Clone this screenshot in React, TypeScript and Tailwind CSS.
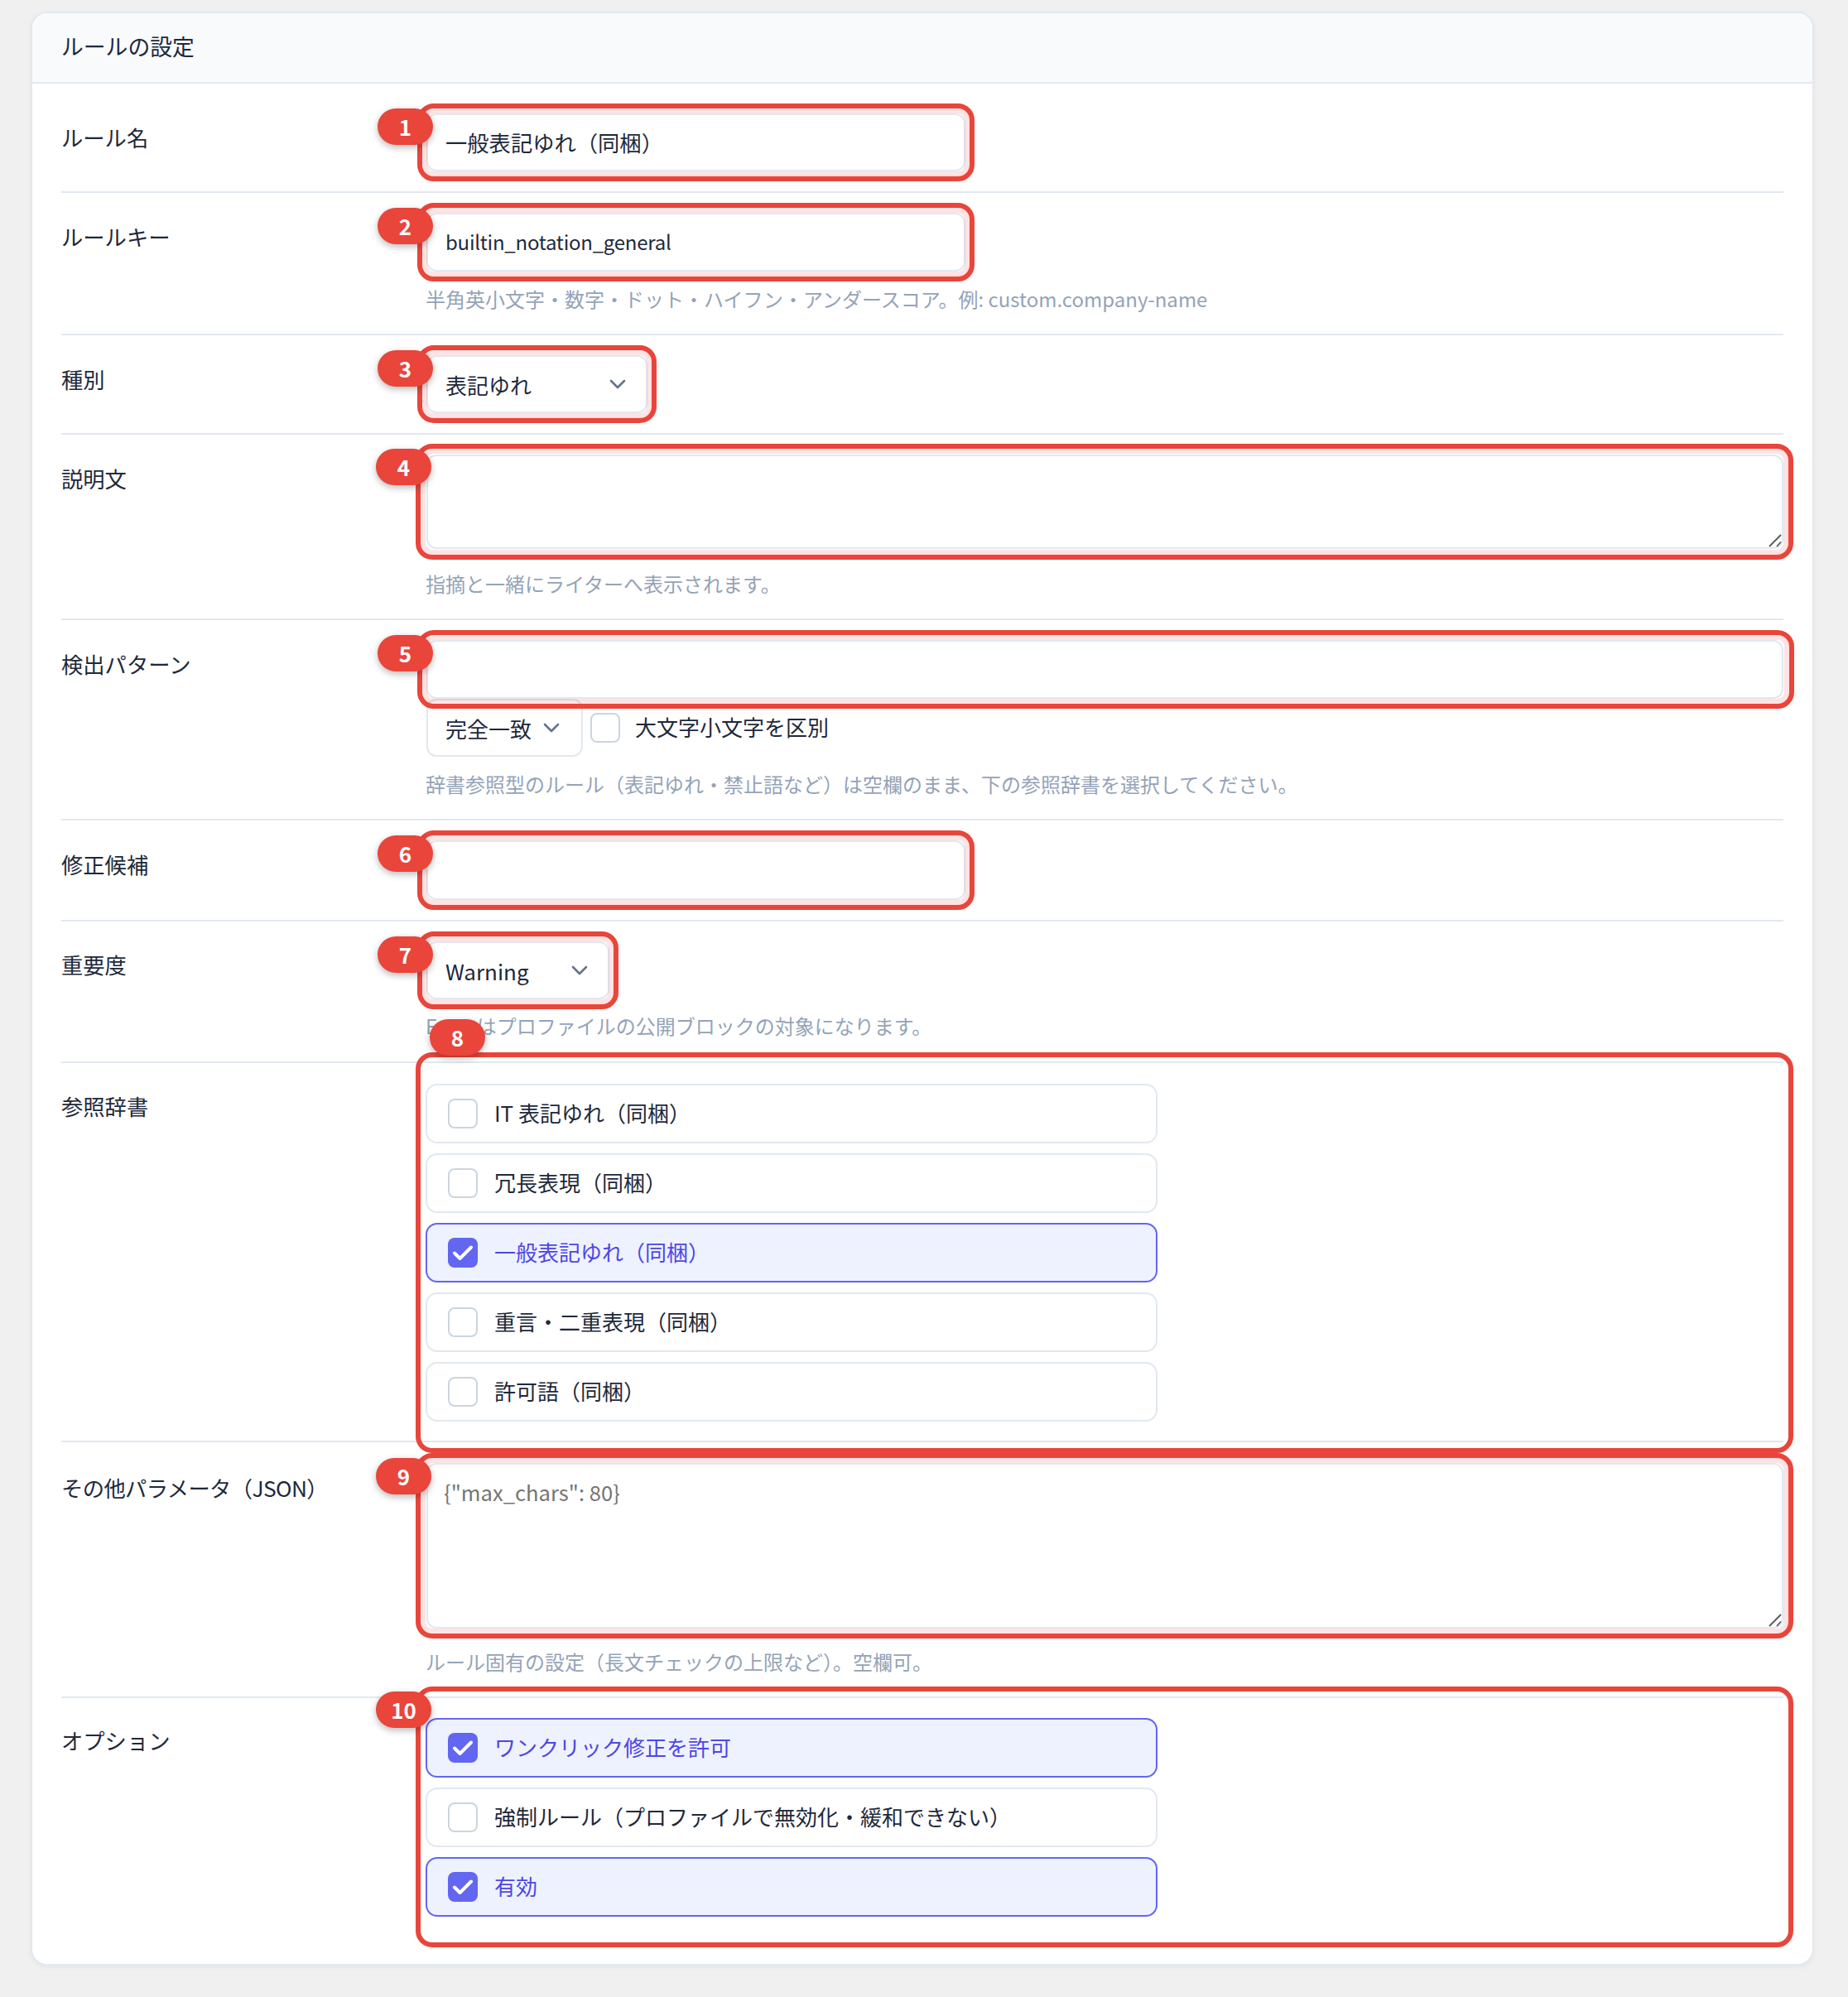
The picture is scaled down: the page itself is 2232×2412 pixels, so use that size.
import type { ReactNode } from "react";

const Chevron = () => (
  <svg width="20" height="12" viewBox="0 0 20 12" fill="none" className="shrink-0">
    <path d="M2 2l8 8 8-8" stroke="#64748b" strokeWidth="2.6" strokeLinecap="round" strokeLinejoin="round" />
  </svg>
);

const Check = () => (
  <svg width="26" height="20" viewBox="0 0 26 20" fill="none">
    <path d="M3 10.5l6.5 6.5L23 3.5" stroke="#ffffff" strokeWidth="4" strokeLinecap="round" strokeLinejoin="round" />
  </svg>
);

const Grip = () => (
  <svg width="16" height="16" viewBox="0 0 16 16" fill="none" className="pointer-events-none absolute right-[2px] bottom-[2px]">
    <path d="M1 15L15 1M10 15l5-5.5" stroke="#5a5a5a" strokeWidth="1.8" />
  </svg>
);

const Badge = ({ n, className }: { n: number; className: string }) => (
  <span className={`absolute z-20 flex h-[44px] w-[67px] items-center justify-center rounded-full bg-[#e9453b] text-[26px] leading-none font-bold text-white shadow-[0_3px_8px_rgba(0,0,0,0.28)] ${className}`}>
    {n}
  </span>
);

// red annotation frame drawn over a control
const Frame = ({ className }: { className: string }) => (
  <span className={`pointer-events-none absolute z-10 rounded-[20px] border-[6px] border-[#e9453b] shadow-[inset_0_0_0_6px_rgba(239,68,68,0.15)] ${className}`} />
);

const Row = ({
  label,
  children,
  last,
  pad = "py-[24px]",
  labelPad = "pt-[9px]",
}: {
  label: string;
  children: ReactNode;
  last?: boolean;
  pad?: string;
  labelPad?: string;
}) => (
  <div className={`flex ${pad} ${last ? "" : "border-b-2 border-[#e2e8f0]"}`}>
    <div className={`w-[441px] shrink-0 text-[26.3px] leading-[40px] text-[#1e293b] ${labelPad}`}>{label}</div>
    <div className="min-w-0 flex-1">{children}</div>
  </div>
);

const Hint = ({ children, className }: { children: ReactNode; className: string }) => (
  <p className={`-ml-[1px] text-[24px] leading-[36px] text-[#94a3b8] ${className}`}>{children}</p>
);

const TextBox = ({ value, className }: { value: string; className: string }) => (
  <input
    readOnly
    value={value}
    className={`block w-full rounded-[12px] border-2 border-[#e2e8f0] bg-white px-[21px] pb-[2px] text-[#1e293b] outline-none ${className}`}
  />
);

const Area = ({ placeholder, className }: { placeholder?: string; className: string }) => (
  <textarea
    readOnly
    placeholder={placeholder}
    className={`block w-full resize-none rounded-[12px] border-2 border-[#e2e8f0] bg-white pt-[13px] pr-[20px] pl-[19px] text-[25.6px] leading-[40px] text-[#1e293b] outline-none placeholder:text-[#757575] ${className}`}
  />
);

const SelectBox = ({ value, className }: { value: string; className: string }) => (
  <div className={`flex h-[70px] items-center justify-between rounded-[12px] border-2 border-[#e2e8f0] bg-white pl-[21px] text-[26px] text-[#1e293b] ${className}`}>
    <span>{value}</span>
    <Chevron />
  </div>
);

const Option = ({ label, checked }: { label: string; checked?: boolean }) => (
  <div
    className={`-ml-[1px] flex h-[72px] w-[884px] items-center gap-[20px] rounded-[14px] border-2 pl-[25px] text-[26px] ${
      checked ? "border-[#6366f1] bg-[#eef2ff] text-[#4f46e5]" : "border-[#e2e8f0] bg-white text-[#1e293b]"
    }`}
  >
    {checked ? (
      <span className="flex h-[36px] w-[36px] shrink-0 items-center justify-center rounded-[8px] bg-[#6366f1]">
        <Check />
      </span>
    ) : (
      <span className="h-[36px] w-[36px] shrink-0 rounded-[8px] border-2 border-[#cbd5e1] bg-white" />
    )}
    <span className="pb-[3px]">{label}</span>
  </div>
);

export default function App() {
  return (
    <div className="min-h-screen bg-[#f0f0f0] pt-[14px] pr-[41px] pb-[39px] pl-[37px] font-['Noto_Sans_CJK_JP',sans-serif]">
      <div className="overflow-hidden rounded-[20px] border-2 border-[#e2e8f0] bg-white shadow-[0_2px_6px_rgba(15,23,42,0.05)]">
        <div className="flex h-[85px] items-center border-b-2 border-[#e2e8f0] bg-[#f8fafc] px-[35px] pb-[2px] text-[26.8px] text-[#1e293b]">
          ルールの設定
        </div>
        <div className="px-[35px] pt-[12px] pb-[33px]">
          <Row label="ルール名">
            <div className="relative w-[651px]">
              <TextBox value="一般表記ゆれ（同梱）" className="h-[70px] text-[26.3px]" />
              <Frame className="-top-[12px] -right-[11px] -bottom-[12px] -left-[11px]" />
              <Badge n={1} className="-top-[6px] -left-[59px]" />
            </div>
          </Row>
          <Row label="ルールキー">
            <div className="relative w-[651px]">
              <TextBox value="builtin_notation_general" className="h-[71px] text-[24px] tracking-[-0.25px]" />
              <Frame className="-top-[12px] -right-[11px] -bottom-[12px] -left-[11px]" />
              <Badge n={2} className="-top-[6px] -left-[59px]" />
            </div>
            <Hint className="mt-[15px]">半角英小文字・数字・ドット・ハイフン・アンダースコア。例: custom.company-name</Hint>
          </Row>
          <Row label="種別">
            <div className="relative w-[267px]">
              <SelectBox value="表記ゆれ" className="w-full pr-[24px]" />
              <Frame className="-top-[12px] -right-[11px] -bottom-[12px] -left-[11px]" />
              <Badge n={3} className="-top-[6px] -left-[59px]" />
            </div>
          </Row>
          <Row label="説明文">
            <div className="relative">
              <Area className="h-[114px]" />
              <Grip />
              <Frame className="-top-[13px] -right-[12px] -bottom-[13px] -left-[13px]" />
              <Badge n={4} className="-top-[7px] -left-[61px]" />
            </div>
            <Hint className="mt-[24px]">指摘と一緒にライターへ表示されます。</Hint>
          </Row>
          <Row label="検出パターン">
            <div className="relative">
              <TextBox value="" className="h-[71px] text-[26px]" />
              <Frame className="-top-[12px] -right-[13px] -bottom-[12px] -left-[11px]" />
              <Badge n={5} className="-top-[6px] -left-[59px]" />
            </div>
            <div className="flex items-start">
              <SelectBox value="完全一致" className="w-[189px] pr-[26px]" />
              <span className="mt-[17px] ml-[9px] h-[36px] w-[36px] shrink-0 rounded-[8px] border-2 border-[#cbd5e1] bg-white" />
              <span className="mt-[14px] ml-[18px] text-[26px] leading-[40px] text-[#1e293b]">大文字小文字を区別</span>
            </div>
            <Hint className="mt-[15px]">辞書参照型のルール（表記ゆれ・禁止語など）は空欄のまま、下の参照辞書を選択してください。</Hint>
          </Row>
          <Row label="修正候補">
            <div className="relative w-[651px]">
              <TextBox value="" className="h-[72px] text-[26px]" />
              <Frame className="-top-[12px] -right-[11px] -bottom-[12px] -left-[11px]" />
              <Badge n={6} className="-top-[6px] -left-[59px]" />
            </div>
          </Row>
          <Row label="重要度" pad="pt-[24px] pb-[25px]" labelPad="pt-[8px]">
            <div className="relative w-[221px]">
              <SelectBox value="Warning" className="w-full pr-[24px]" />
              <Frame className="-top-[12px] -right-[11px] -bottom-[12px] -left-[11px]" />
              <Badge n={7} className="-top-[6px] -left-[59px]" />
            </div>
            <Hint className="mt-[14px]">Error はプロファイルの公開ブロックの対象になります。</Hint>
          </Row>
          <Row label="参照辞書" pad="pt-[25px] pb-[23px]" labelPad="pt-[7px]">
            <div className="relative flex flex-col gap-[12px]">
              <Option label="IT 表記ゆれ（同梱）" />
              <Option label="冗長表現（同梱）" />
              <Option label="一般表記ゆれ（同梱）" checked />
              <Option label="重言・二重表現（同梱）" />
              <Option label="許可語（同梱）" />
              <Frame className="-top-[38px] -right-[12px] -bottom-[38px] -left-[13px] shadow-none" />
              <Badge n={8} className="-top-[78px] left-[4px]" />
            </div>
          </Row>
          <Row label="その他パラメータ（JSON）" pad="pt-[25px] pb-[24px]" labelPad="pt-[10px] tracking-[-0.6px]">
            <div className="relative">
              <Area placeholder={'{"max_chars": 80}'} className="h-[200px]" />
              <Grip />
              <Frame className="-top-[12px] -right-[12px] -bottom-[12px] -left-[13px]" />
              <Badge n={9} className="-top-[6px] -left-[61px]" />
            </div>
            <Hint className="mt-[22px]">ルール固有の設定（長文チェックの上限など）。空欄可。</Hint>
          </Row>
          <Row label="オプション" last labelPad="pt-[7px]">
            <div className="relative flex flex-col gap-[12px]">
              <Option label="ワンクリック修正を許可" checked />
              <Option label="強制ルール（プロファイルで無効化・緩和できない）" />
              <Option label="有効" checked />
              <Frame className="-top-[38px] -right-[12px] -bottom-[37px] -left-[13px] shadow-none" />
              <Badge n={10} className="-top-[32px] -left-[61px]" />
            </div>
          </Row>
        </div>
      </div>
    </div>
  );
}
